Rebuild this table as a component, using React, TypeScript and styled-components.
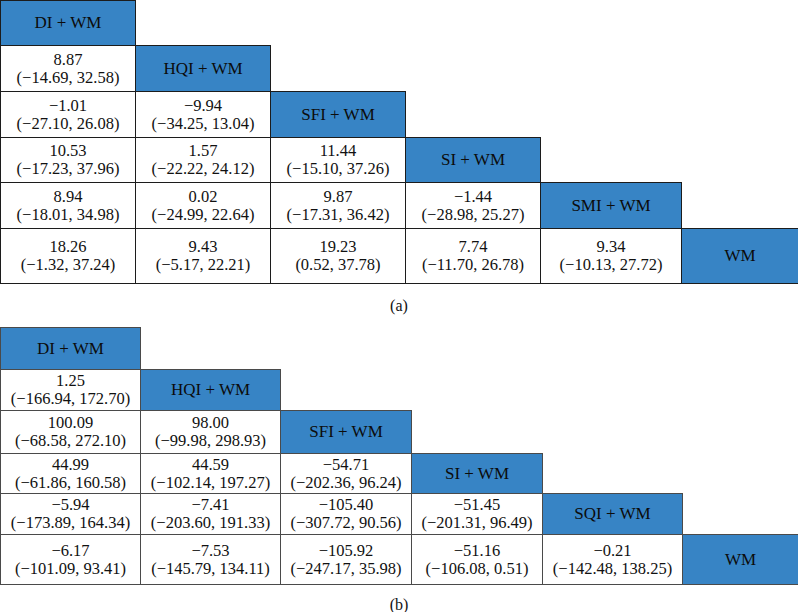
import React from "react";
import styled, { createGlobalStyle } from "styled-components";

const GlobalStyle = createGlobalStyle`
  html, body {
    margin: 0;
    padding: 0;
    background: #ffffff;
    overflow: hidden;
  }
  body {
    font-family: "Liberation Serif", "Times New Roman", serif;
    color: #111;
  }
`;

const Figure = styled.div`
  width: 798px;
  display: flex;
  flex-direction: column;
`;

const Grid = styled.table<{ line: string }>`
  border-collapse: collapse;
  table-layout: fixed;
  width: 798px;
  td {
    border: 1px solid ${({ line }) => line};
  }
`;

const Row = styled.tr<{ h: number }>`
  height: ${({ h }) => h}px;
`;

const Value = styled.td`
  padding: 0;
  text-align: center;
  vertical-align: middle;
  font-size: 16.5px;
  line-height: 18px;
  background: #fff;
`;

const Head = styled.td`
  padding: 0;
  text-align: center;
  vertical-align: middle;
  font-size: 17px;
  background: #3784c5;
  color: #0c0c0c;
`;

const Blank = styled.td`
  &&& {
    border: none;
  }
  padding: 0;
`;

const Caption = styled.div<{ top: number; bottom: number }>`
  text-align: center;
  font-size: 16px;
  line-height: 18px;
  margin-top: ${({ top }) => top}px;
  margin-bottom: ${({ bottom }) => bottom}px;
`;

type Data = {
  heads: string[];
  cols: number[];
  rows: number[];
  values: [string, string][][];
  line: string;
};

const tableA: Data = {
  heads: ["DI + WM", "HQI + WM", "SFI + WM", "SI + WM", "SMI + WM", "WM"],
  cols: [135, 135, 135, 135, 141, 117],
  rows: [45, 46, 46, 45, 46, 55],
  line: "#1c1c1c",
  values: [
    [],
    [["8.87", "(−14.69, 32.58)"]],
    [["−1.01", "(−27.10, 26.08)"], ["−9.94", "(−34.25, 13.04)"]],
    [["10.53", "(−17.23, 37.96)"], ["1.57", "(−22.22, 24.12)"], ["11.44", "(−15.10, 37.26)"]],
    [["8.94", "(−18.01, 34.98)"], ["0.02", "(−24.99, 22.64)"], ["9.87", "(−17.31, 36.42)"], ["−1.44", "(−28.98, 25.27)"]],
    [["18.26", "(−1.32, 37.24)"], ["9.43", "(−5.17, 22.21)"], ["19.23", "(0.52, 37.78)"], ["7.74", "(−11.70, 26.78)"], ["9.34", "(−10.13, 27.72)"]],
  ],
};

const tableB: Data = {
  heads: ["DI + WM", "HQI + WM", "SFI + WM", "SI + WM", "SQI + WM", "WM"],
  cols: [140, 140, 131, 131, 140, 116],
  rows: [42, 41, 43, 40, 41, 50],
  line: "#4a4a4a",
  values: [
    [],
    [["1.25", "(−166.94, 172.70)"]],
    [["100.09", "(−68.58, 272.10)"], ["98.00", "(−99.98, 298.93)"]],
    [["44.99", "(−61.86, 160.58)"], ["44.59", "(−102.14, 197.27)"], ["−54.71", "(−202.36, 96.24)"]],
    [["−5.94", "(−173.89, 164.34)"], ["−7.41", "(−203.60, 191.33)"], ["−105.40", "(−307.72, 90.56)"], ["−51.45", "(−201.31, 96.49)"]],
    [["−6.17", "(−101.09, 93.41)"], ["−7.53", "(−145.79, 134.11)"], ["−105.92", "(−247.17, 35.98)"], ["−51.16", "(−106.08, 0.51)"], ["−0.21", "(−142.48, 138.25)"]],
  ],
};

function Triangle({ data }: { data: Data }) {
  const n = data.heads.length;
  return (
    <Grid line={data.line}>
      <colgroup>
        {data.cols.map((w, i) => (
          <col key={i} style={{ width: w }} />
        ))}
      </colgroup>
      <tbody>
        {data.heads.map((head, r) => (
          <Row key={r} h={data.rows[r]}>
            {data.values[r].map(([est, ci], c) => (
              <Value key={c}>
                {est}
                <br />
                {ci}
              </Value>
            ))}
            <Head>{head}</Head>
            {r < n - 1 && <Blank colSpan={n - 1 - r} />}
          </Row>
        ))}
      </tbody>
    </Grid>
  );
}

export default function App() {
  return (
    <>
      <GlobalStyle />
      <Figure>
        <Triangle data={tableA} />
        <Caption top={13} bottom={12}>(a)</Caption>
        <Triangle data={tableB} />
        <Caption top={11} bottom={0}>(b)</Caption>
      </Figure>
    </>
  );
}
